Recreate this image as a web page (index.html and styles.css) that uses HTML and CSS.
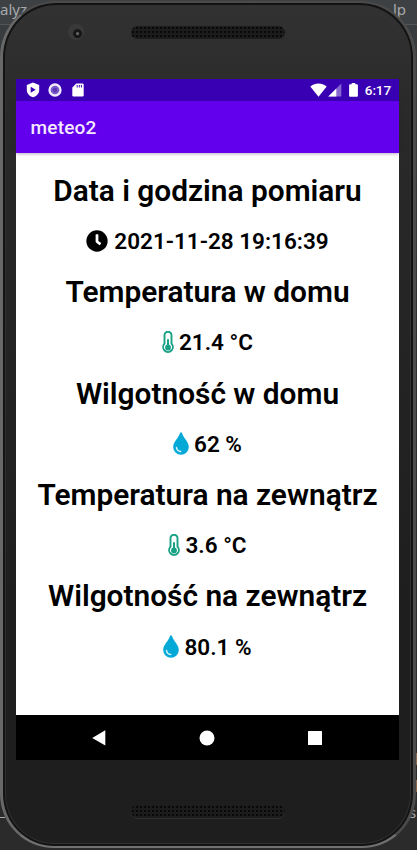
FILE: index.html
```html
<!DOCTYPE html>
<html lang="pl">
<head>
<meta charset="utf-8">
<title>meteo2</title>
<link rel="stylesheet" href="styles.css">
</head>
<body>
<div class="desk">
  <span class="behind behind-left">alyz</span>
  <span class="behind behind-right">lp</span>
  <span class="behind behind-bottom">s</span>
  <span class="strip strip-a"></span><span class="strip strip-b"></span>
  <span class="rule rule-left"></span>
  <main class="phone">
    <div class="bezel bezel-top">
      <span class="camera"></span>
      <span class="speaker"></span>
    </div>
    <div class="screen">
      <div class="status">
        <svg class="s-shield" width="14" height="16" viewBox="0 0 14 16"><path fill="#fff" d="M7 .5 13.200 3v5c0 3.600-2.600 6.200-6.200 7.300C3.400 14.200.8 11.600.8 8V3z"/><path fill="#3900b3" d="M4.700 4.800v6l5-3z"/></svg>
        <svg class="s-ring" width="14" height="14" viewBox="0 0 14 14"><circle cx="7" cy="7" r="5.500" fill="#7958c8" stroke="#f1eafd" stroke-width="2.300"/><circle cx="7" cy="7" r="2.200" fill="#5b36b5"/></svg>
        <svg class="s-sd" width="12" height="14" viewBox="0 0 12 14"><path fill="#fff" d="M4.300.5h6.200q1.200 0 1.200 1.200v10.600q0 1.200-1.200 1.200h-9Q.3 13.500.3 12.300V4.500z"/><path stroke="#3900b3" stroke-width="1" d="M5.200 2v2.500M7.300 2v2.500M9.400 2v2.500"/></svg>
        <span class="grow"></span>
        <svg class="s-wifi" width="17" height="14" viewBox="0 0 17 14"><path fill="#fff" d="M.3 3.400C5-.6 12-.6 16.700 3.400L8.500 13.700z"/></svg>
        <svg class="s-signal" width="14" height="14" viewBox="0 0 14 14"><path fill="#8866d1" d="M13.300.5v13H.3z"/><path fill="#fff" d="M8.300 5.500v8h-8z"/></svg>
        <svg class="s-batt" width="9" height="14" viewBox="0 0 9 14"><path fill="#fff" d="M2.700 0h3.600v1.300H8q.9 0 .9.900v10.600q0 .9-.9.900H1q-.9 0-.9-.9V2.200q0-.9.900-.9h1.700z"/></svg>
        <span class="clock">6:17</span>
      </div>
      <header class="appbar">meteo2</header>
      <section class="content">
        <h1>Data i godzina pomiaru</h1>
        <p><svg class="i-clock" width="22" height="22" viewBox="0 0 512 512"><path d="M256 8a248 248 0 1 0 0 496 248 248 0 0 0 0-496zm92.500 313-20 25a16 16 0 0 1-22.500 2.500l-67-49.700a40 40 0 0 1-15-31.200V112a16 16 0 0 1 16-16h32a16 16 0 0 1 16 16v144l58 42.500a16 16 0 0 1 2.500 22.500z"/></svg>2021-11-28 19:16:39</p>
        <h1>Temperatura w domu</h1>
        <p><svg class="i-temp" width="12" height="23" viewBox="0 0 12 23"><use href="#therm"/></svg>21.4 °C</p>
        <h1>Wilgotność w domu</h1>
        <p><svg class="i-drop" width="16" height="23" viewBox="0 0 16 23"><use href="#drop"/></svg>62 %</p>
        <h1>Temperatura na zewnątrz</h1>
        <p><svg class="i-temp" width="12" height="23" viewBox="0 0 12 23"><use href="#therm"/></svg>3.6 °C</p>
        <h1>Wilgotność na zewnątrz</h1>
        <p><svg class="i-drop" width="16" height="23" viewBox="0 0 16 23"><use href="#drop"/></svg>80.1 %</p>
      </section>
      <nav class="navbar">
        <svg width="16" height="18" viewBox="0 0 16 18"><path fill="#fff" d="M14.300 1.300v15.200L1.200 8.900z"/></svg>
        <svg width="16" height="18" viewBox="0 0 16 18"><circle cx="8" cy="9" r="7.500" fill="#fff"/></svg>
        <svg width="16" height="18" viewBox="0 0 16 18"><rect x="1" y="2" width="14" height="14" rx=".6" fill="#fff"/></svg>
      </nav>
    </div>
    <div class="bezel bezel-bottom"><span class="speaker"></span></div>
  </main>
</div>
<svg class="defs" width="0" height="0">
  <symbol id="therm" viewBox="0 0 12 23"><path fill="none" stroke="#17a085" stroke-width="1.900" d="M2.500 12.600V4.200a3.500 3.500 0 0 1 7 0v8.400a4.900 4.900 0 1 1-7 0z"/><path stroke="#17a085" stroke-width="2" stroke-linecap="round" d="M6 9v7"/><circle cx="6" cy="16.500" r="2.900" fill="#17a085"/></symbol>
  <symbol id="drop" viewBox="0 0 16 23"><path fill="#05a9d8" d="M7 1.100q1-1.600 2 0C10.700 6.500 15.800 9.900 15.800 14.900a7.800 7.800 0 0 1-15.600 0C.2 9.900 5.300 6.500 7 1.100z"/><path fill="none" stroke="#d9f5fd" stroke-width="1.500" stroke-linecap="round" d="M3.500 15.500a4.600 4.600 0 0 0 4.200 4"/></symbol>
</svg>
</body>
</html>
```

FILE: styles.css
```css
* { box-sizing: border-box; }
body { margin: 0; background: #2b2b2b; font-family: Roboto, sans-serif; }
.defs { position: absolute; }
.desk {
  position: relative;
  width: 417px;
  height: 850px;
  padding: 1px 1px 2px 0;
  overflow: hidden;
  background: linear-gradient(#3d4144 0 24px, #555 24px 25px, #383c3e 25px 110px, #2b2b2b 400px);
}
.behind { position: absolute; color: #a7a9aa; font: 15px/18px "Noto Sans", sans-serif; }
.behind-left { left: 0; top: 0; }
.behind-right { left: 393px; top: 0; }
.behind-bottom { left: 409px; top: 803px; }
.strip { position: absolute; left: 414px; width: 3px; height: 12px; background: #8c6549; }
.strip-a { top: 753px; }
.strip-b { top: 780px; }
.rule { position: absolute; height: 1px; background: #aaa; }
.rule-left { left: 0; top: 817px; width: 5px; }
.phone {
  position: relative;
  display: flex;
  flex-direction: column;
  height: 847px;
  border: solid;
  border-width: 2px 3px 2px 3px;
  border-color: #4a4a4a #4b4b4b #707070 #686868;
  border-radius: 56px 56px 54px 54px;
  padding: 0 13px;
  background: linear-gradient(#323232 0, #292929 120px, #1e1e1e 600px);
  box-shadow: inset 0 0 0 2px #131313, inset 0 0 0 3px #303030;
}
.bezel { display: flex; justify-content: center; flex: none; }
.bezel-top { position: relative; height: 76px; padding-top: 23px; }
.bezel-bottom { padding-top: 45px; }
.speaker {
  width: 154px;
  height: 13px;
  border-radius: 7px;
  background: radial-gradient(circle, #080808 1px, transparent 1.3px) 0 0 / 4px 4px, #1c1c1c;
  box-shadow: 0 1px 0 #303030;
}
.camera {
  position: absolute;
  left: 52px;
  top: 21px;
  width: 16px;
  height: 16px;
  border-radius: 50%;
  background: radial-gradient(circle at 60% 60%, #666 0 1px, #171717 2px 4px, #393939 5px);
}
.screen { display: flex; flex-direction: column; flex: none; height: 681px; width: 383px; background: #fff; }
.status { display: flex; align-items: center; height: 22px; padding: 0 8px 0 10px; background: #3900b3; color: #fff; }
.s-ring { margin-left: 8px; }
.s-sd { margin-left: 10px; }
.grow { flex: 1; }
.s-signal { margin-left: 1px; }
.s-batt { margin-left: 7px; }
.clock { margin-left: 7px; font-size: 13.500px; font-weight: 500; line-height: 22px; letter-spacing: -.1px; }
.appbar {
  height: 52px;
  padding-left: 14.500px;
  background: #6200ee;
  color: #f4e9ff;
  font-size: 19px;
  font-weight: 500;
  line-height: 53px;
  letter-spacing: .2px;
  box-shadow: 0 1px 3px rgba(60, 20, 100, .35);
}
.content { flex: 1; padding-top: 12px; color: #000; }
.content h1, .content p {
  display: flex;
  align-items: center;
  justify-content: center;
  height: 50.700px;
  margin: 0;
  white-space: nowrap;
}
.content h1 { font-size: 29.850px; font-weight: 600; }
.content p { font-size: 22.500px; font-weight: 600; }
.i-clock { margin-right: 6px; }
.i-temp { margin-right: 5px; }
.i-drop { margin-right: 5px; }
.navbar { display: flex; align-items: center; justify-content: space-between; height: 45px; padding: 0 76px 0 75px; background: #000; }
```
